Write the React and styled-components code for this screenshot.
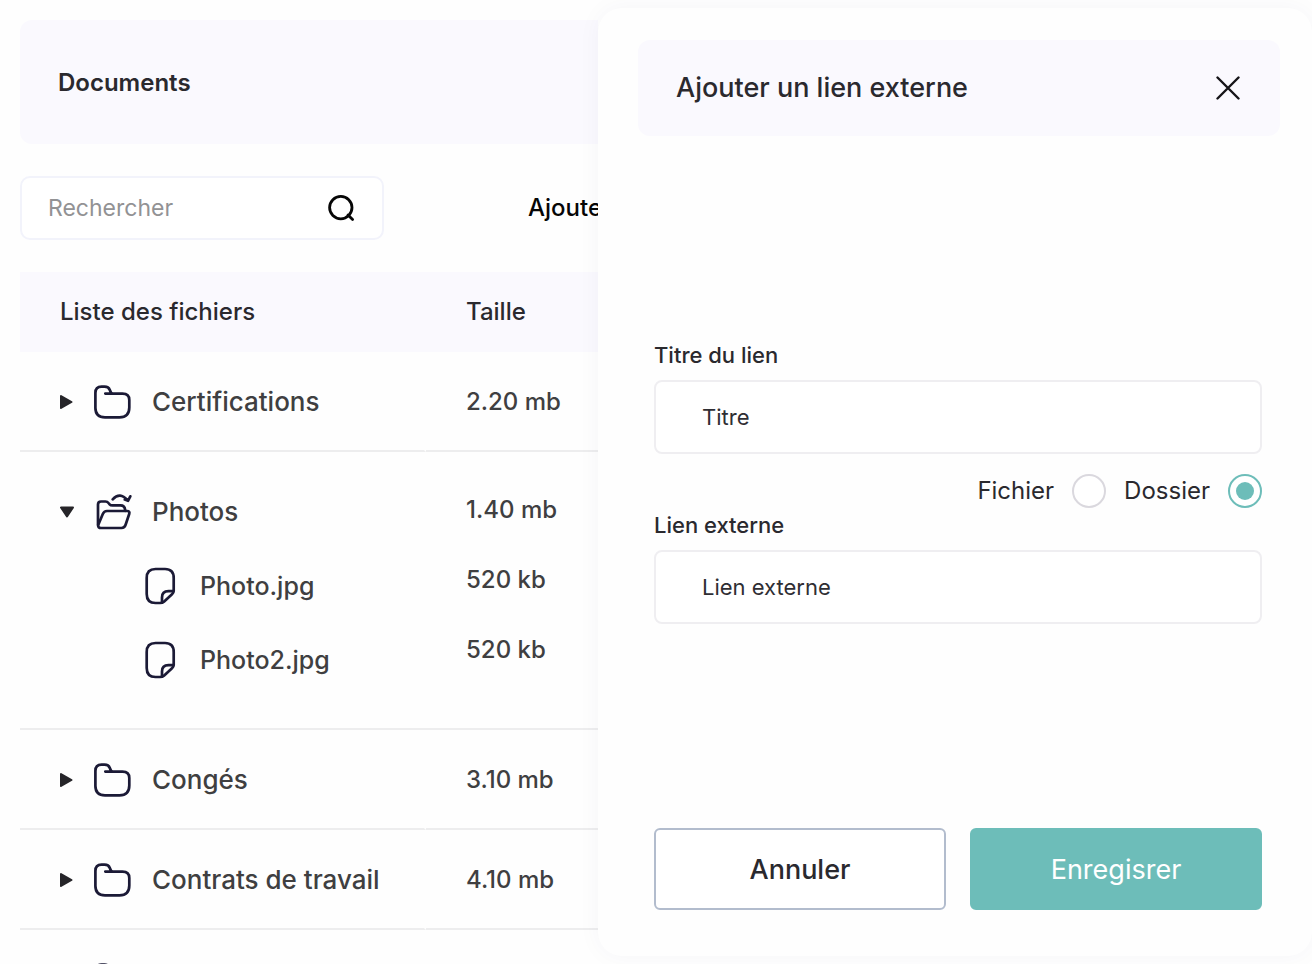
import React, { useState } from "react";
import styled, { createGlobalStyle } from "styled-components";

const GlobalStyle = createGlobalStyle`
  *, *::before, *::after { box-sizing: border-box; }
  body {
    margin: 0;
    background: #fefefe;
    color: #2a292e;
    font-family: Inter, "Open Sans", sans-serif;
  }
  button, input { font: inherit; color: inherit; }
`;

const Page = styled.div`
  display: grid;
  grid-template-columns: minmax(0, 598fr) minmax(0, 714fr);
  height: 100vh;
  min-height: 720px;
  overflow: hidden;
`;

const Main = styled.main`
  min-width: 0;
  min-height: 0;
  overflow: hidden;
  padding: 20px 0 0 20px;
`;

const PageHeader = styled.header`
  display: flex;
  align-items: center;
  height: 124px;
  padding: 2px 38px 0;
  border-radius: 12px 0 0 12px;
  background: #faf9fe;
`;

const PageTitle = styled.h1`
  margin: 0;
  font-size: 24px;
  line-height: 32px;
  font-weight: 600;
`;

const Toolbar = styled.div`
  display: flex;
  align-items: center;
  gap: 144px;
  margin: 32px 0;
`;

const SearchBox = styled.label`
  display: flex;
  flex: 0 0 364px;
  align-items: center;
  min-width: 0;
  height: 64px;
  padding: 0 26px;
  border: 2px solid #f2f3fb;
  border-radius: 10px;
  background: #fff;
`;

const SearchInput = styled.input`
  flex: 1;
  width: 100%;
  min-width: 0;
  padding: 0;
  border: 0;
  outline: 0;
  background: transparent;
  font-size: 23px;
  line-height: 32px;
  &::placeholder { color: #929294; opacity: 1; }
`;

const AddButton = styled.button`
  flex: none;
  padding: 0;
  border: 0;
  background: none;
  color: #060606;
  font-size: 24px;
  line-height: 32px;
  font-weight: 500;
  cursor: pointer;
`;

const FileTable = styled.table`
  width: 100%;
  table-layout: fixed;
  border-spacing: 0;
  font-size: 24px;
  font-weight: 500;
  line-height: 32px;
`;

const NameColumn = styled.col`
  width: 406px;
`;

const HeadCell = styled.th`
  height: 80px;
  padding: 0 0 0 40px;
  background: #faf9fe;
  font-weight: 500;
  text-align: left;
`;

const Cell = styled.td`
  height: ${(p) => (p.$open ? 278 : 100)}px;
  padding: ${(p) => (p.$open ? "23px 0 0 40px" : "2px 0 0 40px")};
  border-bottom: 2px solid #ededee;
  border-right: ${(p) => (p.$split ? "2px solid transparent" : "0")};
  color: #3f3f41;
  vertical-align: ${(p) => (p.$open ? "top" : "middle")};
  white-space: nowrap;
`;

const FolderLine = styled.div`
  display: flex;
  align-items: center;
  height: ${(p) => (p.$open ? 74 : 40)}px;
  font-size: 26px;
`;

const Toggle = styled.button`
  display: flex;
  width: 14px;
  height: 16px;
  margin-right: 18px;
  padding: 0;
  border: 0;
  background: none;
  cursor: pointer;
`;

const Glyph = styled.svg`
  flex: none;
  width: 40px;
  height: 40px;
  margin-right: 20px;
  fill: none;
  stroke: #1b1a36;
  stroke-width: 2.7;
  stroke-linecap: round;
  stroke-linejoin: round;
`;

const FileList = styled.ul`
  margin: 0;
  padding: 0 0 0 80px;
  list-style: none;
`;

const FileItem = styled.li`
  display: flex;
  align-items: center;
  height: 74px;
  font-size: 25px;
`;

const SizeLine = styled.div`
  height: 70px;
  line-height: 70px;
`;

const Drawer = styled.aside`
  position: relative;
  z-index: 1;
  display: flex;
  flex-direction: column;
  margin: 8px 0;
  padding: 32px 32px 46px 40px;
  border-radius: 24px;
  background: #fefefe;
  box-shadow: 0 0 24px rgba(60, 40, 110, 0.04);
`;

const DrawerHeader = styled.header`
  display: flex;
  flex: none;
  align-items: center;
  justify-content: space-between;
  height: 96px;
  padding: 0 40px 0 38px;
  border-radius: 12px;
  background: #faf9fe;
`;

const DrawerTitle = styled.h2`
  margin: 0;
  font-size: 27px;
  line-height: 32px;
  font-weight: 500;
`;

const CloseButton = styled.button`
  display: flex;
  padding: 0;
  border: 0;
  background: none;
  cursor: pointer;
`;

const LinkForm = styled.form`
  display: flex;
  flex: 1;
  flex-direction: column;
  padding: 0 18px 0 16px;
`;

const Fields = styled.div`
  display: flex;
  flex: 1;
  flex-direction: column;
  justify-content: center;
`;

const FieldLabel = styled.label`
  margin-bottom: 10px;
  font-size: 22px;
  line-height: 30px;
  font-weight: 500;
`;

const TextField = styled.input`
  width: 100%;
  height: 74px;
  padding: 0 46px;
  border: 2px solid #efeef1;
  border-radius: 8px;
  outline: 0;
  background: #fff;
  font-size: 22px;
  &::placeholder { color: #2f2e33; opacity: 1; }
`;

const Choices = styled.div`
  display: flex;
  justify-content: flex-end;
  gap: 18px;
  margin: 20px 0 2px;
`;

const Choice = styled.label`
  display: flex;
  align-items: center;
  gap: 18px;
  font-size: 24px;
  line-height: 34px;
`;

const Radio = styled.input`
  appearance: none;
  display: grid;
  place-items: center;
  width: 34px;
  height: 34px;
  margin: 0;
  border: 2px solid #dad8de;
  border-radius: 50%;
  background: #fff;
  &:checked { border-color: #6dbdb9; }
  &:checked::before {
    content: "";
    width: 18px;
    height: 18px;
    border-radius: 50%;
    background: #6dbdb9;
  }
`;

const Actions = styled.div`
  display: grid;
  grid-template-columns: 1fr 1fr;
  gap: 24px;
`;

const ActionButton = styled.button`
  height: 82px;
  border: 2px solid ${(p) => (p.$primary ? "#6dbdb9" : "#b2bccd")};
  border-radius: 6px;
  background: ${(p) => (p.$primary ? "#6dbdb9" : "#fff")};
  color: ${(p) => (p.$primary ? "#fff" : "#2a292e")};
  font-size: 27px;
  font-weight: ${(p) => (p.$primary ? 400 : 500)};
  cursor: pointer;
`;

const FolderIcon = () => (
  <Glyph viewBox="0 1 40 40" aria-hidden="true">
    <path d="M13.3 12.6H30.5Q37.3 12.6 37.3 19V26.5Q37.3 36.3 27.5 36.3H13Q3.4 36.3 3.4 27V12Q3.4 5.7 9.5 5.7H12.5Q16.6 5.7 17.8 9Q19 12.6 21 12.6" />
  </Glyph>
);

const OpenFolderIcon = () => (
  <Glyph viewBox="0 1 40 40" aria-hidden="true">
    <path d="M6 34V13.5Q6 10.5 9 10.5H13.5Q15.3 10.5 16.5 12L17.6 13.3Q18.5 14.4 20.5 14.4H28.5Q33 14.4 33.2 19.8" />
    <path d="M15 20H35Q38.2 20 37.2 23L33.6 33.8Q32.6 37 29.5 37H9Q5.8 37 6.2 34L10.8 23Q12 20 15 20Z" />
    <path d="M20.7 8.3Q28 0.5 35.4 9.2M32.8 8.6L36 9.8L38.3 5.3" />
  </Glyph>
);

const FileIcon = () => (
  <Glyph viewBox="0 1 40 40" aria-hidden="true">
    <path d="M33.7 26V13Q33.7 4 25 4H15.5Q6.7 4 6.7 13V29Q6.7 38 15.5 38H20Q22.5 38 24.2 36.4L32 29.2Q33.7 27.6 33.7 26Z" />
    <path d="M33 26.2H28.5Q22 26.2 22 32.5V37.4" />
  </Glyph>
);

const Caret = ({ open }) => (
  <svg width="14" height="16" viewBox="0 0 14 16" fill="#262529" stroke="#262529" strokeWidth="2" strokeLinejoin="round" aria-hidden="true">
    <path d={open ? "M1 3.5H13L7 12.5Z" : "M1 2L11.5 8L1 14Z"} />
  </svg>
);

const SearchIcon = () => (
  <svg width="28" height="28" viewBox="1 0 28 28" fill="none" stroke="#060606" strokeWidth="2.8" strokeLinecap="round" aria-hidden="true">
    <circle cx="13.8" cy="13.6" r="11.2" />
    <path d="M21 21L25.6 25.6" />
  </svg>
);

const CloseIcon = () => (
  <svg width="24" height="24" viewBox="0 0 24 24" fill="none" stroke="#151418" strokeWidth="2.4" strokeLinecap="round" aria-hidden="true">
    <path d="M1.5 1.5L22.5 22.5M22.5 1.5L1.5 22.5" />
  </svg>
);

const folders = [
  { name: "Certifications", size: "2.20 mb" },
  {
    name: "Photos",
    size: "1.40 mb",
    files: [
      { name: "Photo.jpg", size: "520 kb" },
      { name: "Photo2.jpg", size: "520 kb" },
    ],
  },
  { name: "Congés", size: "3.10 mb" },
  { name: "Contrats de travail", size: "4.10 mb" },
  { name: "", size: "" },
];

function FolderRow({ folder }) {
  const open = Boolean(folder.files);
  return (
    <tr>
      <Cell $open={open} $split={!open}>
        <FolderLine $open={open}>
          <Toggle type="button" aria-expanded={open} aria-label={open ? "Replier" : "Déplier"}>
            <Caret open={open} />
          </Toggle>
          {open ? <OpenFolderIcon /> : <FolderIcon />}
          {folder.name}
        </FolderLine>
        {open && (
          <FileList>
            {folder.files.map((file) => (
              <FileItem key={file.name}>
                <FileIcon />
                {file.name}
              </FileItem>
            ))}
          </FileList>
        )}
      </Cell>
      <Cell $open={open}>
        {open
          ? [folder, ...folder.files].map((entry) => <SizeLine key={entry.name}>{entry.size}</SizeLine>)
          : folder.size}
      </Cell>
    </tr>
  );
}

export default function App() {
  const [kind, setKind] = useState("dossier");

  return (
    <>
      <GlobalStyle />
      <Page>
        <Main>
          <PageHeader>
            <PageTitle>Documents</PageTitle>
          </PageHeader>
          <Toolbar>
            <SearchBox>
              <SearchInput type="text" placeholder="Rechercher" aria-label="Rechercher" />
              <SearchIcon />
            </SearchBox>
            <AddButton type="button">Ajouter</AddButton>
          </Toolbar>
          <FileTable>
            <colgroup>
              <NameColumn />
              <col />
            </colgroup>
            <thead>
              <tr>
                <HeadCell scope="col">Liste des fichiers</HeadCell>
                <HeadCell scope="col">Taille</HeadCell>
              </tr>
            </thead>
            <tbody>
              {folders.map((folder) => (
                <FolderRow key={folder.name} folder={folder} />
              ))}
            </tbody>
          </FileTable>
        </Main>

        <Drawer aria-labelledby="drawer-title">
          <DrawerHeader>
            <DrawerTitle id="drawer-title">Ajouter un lien externe</DrawerTitle>
            <CloseButton type="button" aria-label="Fermer">
              <CloseIcon />
            </CloseButton>
          </DrawerHeader>
          <LinkForm onSubmit={(event) => event.preventDefault()}>
            <Fields>
              <FieldLabel htmlFor="link-title">Titre du lien</FieldLabel>
              <TextField id="link-title" type="text" placeholder="Titre" />
              <Choices role="radiogroup" aria-label="Type">
                <Choice>
                  Fichier
                  <Radio type="radio" name="kind" checked={kind === "fichier"} onChange={() => setKind("fichier")} />
                </Choice>
                <Choice>
                  Dossier
                  <Radio type="radio" name="kind" checked={kind === "dossier"} onChange={() => setKind("dossier")} />
                </Choice>
              </Choices>
              <FieldLabel htmlFor="link-url">Lien externe</FieldLabel>
              <TextField id="link-url" type="text" placeholder="Lien externe" />
            </Fields>
            <Actions>
              <ActionButton type="button">Annuler</ActionButton>
              <ActionButton type="submit" $primary>Enregisrer</ActionButton>
            </Actions>
          </LinkForm>
        </Drawer>
      </Page>
    </>
  );
}
